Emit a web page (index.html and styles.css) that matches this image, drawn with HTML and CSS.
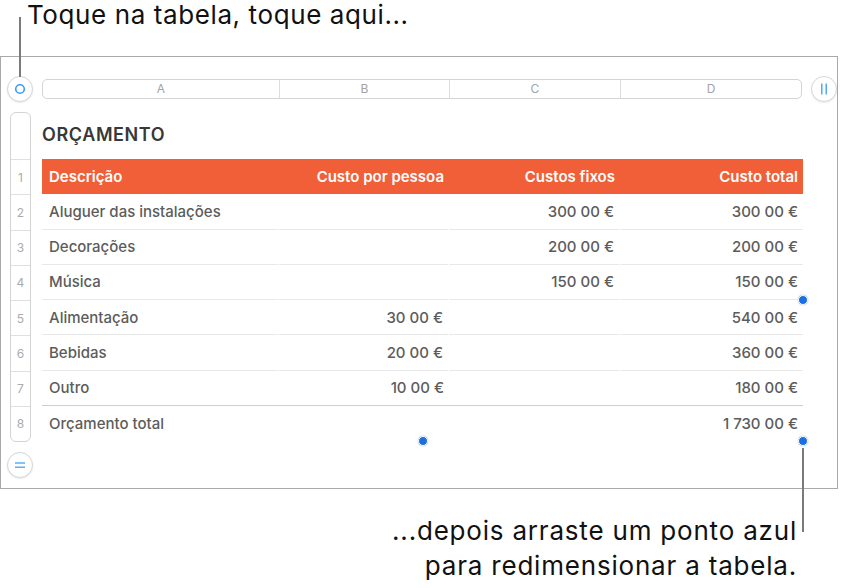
FILE: index.html
```html
<!DOCTYPE html>
<html lang="pt">
<head>
<meta charset="utf-8">
<title>Orçamento</title>
<link rel="stylesheet" href="styles.css">
</head>
<body>
<div class="page">
  <span class="leader leader-top"></span>
  <p class="callout callout-top">Toque na tabela, toque aqui...</p>

  <div class="frame">
    <div class="toolbar">
      <button class="round-btn" aria-label="Selecionar tabela">
        <svg width="26" height="26" viewBox="0 0 26 26"><circle cx="13" cy="13" r="4.3" fill="none" stroke="#3a9cf5" stroke-width="1.6"/></svg>
      </button>
      <div class="col-bar">
        <div class="col-cell">A</div>
        <div class="col-cell">B</div>
        <div class="col-cell">C</div>
        <div class="col-cell">D</div>
      </div>
      <button class="round-btn" aria-label="Colunas">
        <svg width="26" height="26" viewBox="0 0 26 26"><path d="M10.8 7.5v11M15.2 7.5v11" stroke="#3a9cf5" stroke-width="1.3" fill="none"/></svg>
      </button>
    </div>

    <div class="sheet">
      <div class="rail">
        <div class="rail-head"></div>
        <div class="rail-cell">1</div>
        <div class="rail-cell">2</div>
        <div class="rail-cell">3</div>
        <div class="rail-cell">4</div>
        <div class="rail-cell">5</div>
        <div class="rail-cell">6</div>
        <div class="rail-cell">7</div>
        <div class="rail-cell">8</div>
      </div>

      <div class="table-area">
        <h2 class="title">ORÇAMENTO</h2>
        <div class="table">
          <div class="row head">
            <div class="cell">Descrição</div>
            <div class="cell num">Custo por pessoa</div>
            <div class="cell num">Custos fixos</div>
            <div class="cell num">Custo total</div>
          </div>
          <div class="row">
            <div class="cell">Aluguer das instalações</div>
            <div class="cell num"></div>
            <div class="cell num">300 00 €</div>
            <div class="cell num">300 00 €</div>
          </div>
          <div class="row">
            <div class="cell">Decorações</div>
            <div class="cell num"></div>
            <div class="cell num">200 00 €</div>
            <div class="cell num">200 00 €</div>
          </div>
          <div class="row">
            <div class="cell">Música</div>
            <div class="cell num"></div>
            <div class="cell num">150 00 €</div>
            <div class="cell num">150 00 €</div>
          </div>
          <div class="row">
            <div class="cell">Alimentação</div>
            <div class="cell num">30 00 €</div>
            <div class="cell num"></div>
            <div class="cell num">540 00 €</div>
          </div>
          <div class="row">
            <div class="cell">Bebidas</div>
            <div class="cell num">20 00 €</div>
            <div class="cell num"></div>
            <div class="cell num">360 00 €</div>
          </div>
          <div class="row before-total">
            <div class="cell">Outro</div>
            <div class="cell num">10 00 €</div>
            <div class="cell num"></div>
            <div class="cell num">180 00 €</div>
          </div>
          <div class="row total">
            <div class="cell">Orçamento total</div>
            <div class="cell num"></div>
            <div class="cell num"></div>
            <div class="cell num">1 730 00 €</div>
          </div>

          <span class="handle handle-right"></span>
          <span class="handle handle-bottom"></span>
          <span class="handle handle-corner"></span>
        </div>
      </div>
    </div>

    <button class="round-btn rows-btn" aria-label="Linhas">
      <svg width="26" height="26" viewBox="0 0 26 26"><path d="M8 11h10M8 15.3h10" stroke="#5aaef5" stroke-width="1.5" fill="none"/></svg>
    </button>
  </div>

  <span class="leader leader-bottom"></span>
  <p class="callout callout-bottom">...depois arraste um ponto azul<br>para redimensionar a tabela.</p>
</div>
</body>
</html>
```

FILE: styles.css
```css
* {
  box-sizing: border-box;
}

html, body {
  margin: 0;
  padding: 0;
  background: #ffffff;
}

body {
  font-family: Inter, "Liberation Sans", sans-serif;
  color: #111;
}

.page {
  position: relative;
  width: 843px;
  height: 588px;
  overflow: hidden;
}

.callout {
  margin: 0;
  font-size: 26px;
  font-weight: 400;
  color: #111;
  letter-spacing: 0.6px;
}

.callout-top {
  line-height: 30px;
  padding-left: 27px;
}

.callout-bottom {
  margin-top: 24px;
  line-height: 35px;
  text-align: right;
  padding-right: 46px;
  letter-spacing: 0.8px;
}

.leader {
  position: absolute;
  width: 2px;
  background: #7b7b7b;
  z-index: 2;
}

.leader-top {
  left: 19px;
  top: 17px;
  height: 60px;
}

.leader-bottom {
  left: 802px;
  top: 448px;
  height: 84px;
}

/* frame */
.frame {
  margin-top: 26px;
  width: 838px;
  height: 433px;
  border: 1px solid #a9a9a9;
  display: flex;
  flex-direction: column;
}

.toolbar {
  margin-top: 19px;
  height: 26px;
  padding-left: 6px;
  display: flex;
  align-items: center;
}

.round-btn {
  width: 26px;
  height: 26px;
  padding: 0;
  border: 1px solid #d6d6d6;
  border-radius: 50%;
  background: #fff;
  box-shadow: 0 1px 1.5px rgba(0, 0, 0, 0.08);
  display: flex;
  align-items: center;
  justify-content: center;
  flex: none;
}

.round-btn svg {
  display: block;
  margin: -1px;
}

.col-bar {
  margin: 0 9px;
  width: 761px;
  height: 20px;
  border: 1px solid #d4d4d4;
  border-radius: 5px;
  display: grid;
  grid-template-columns: 236px 170px 171px 1fr;
  background: #fff;
}

.col-cell {
  font-size: 12px;
  line-height: 18px;
  color: #a3a3a3;
  text-align: center;
  border-left: 1px solid #dcdcdc;
}

.col-cell:first-child {
  border-left: none;
}

/* sheet */
.sheet {
  margin-top: 10px;
  display: flex;
  align-items: flex-start;
}

.rail {
  margin-left: 9px;
  width: 21px;
  border: 1px solid #d4d4d4;
  border-radius: 6px;
  display: flex;
  flex-direction: column;
}

.rail-head {
  height: 46px;
}

.rail-cell {
  height: 35.25px;
  border-top: 1px solid #e0e0e0;
  font-size: 12px;
  color: #ababab;
  display: flex;
  align-items: center;
  justify-content: center;
}

.table-area {
  margin-left: 11px;
  width: 761px;
}

.title {
  margin: 0;
  height: 47px;
  padding-top: 12px;
  font-size: 18px;
  line-height: 22px;
  font-weight: 600;
  color: #383838;
  letter-spacing: 0.6px;
}

.table {
  position: relative;
}

.row {
  display: grid;
  grid-template-columns: 237px 170px 171px 183px;
  height: 35.25px;
}

.cell {
  padding: 0 5px 0 7px;
  margin-right: 1px;
  font-size: 15px;
  font-weight: 500;
  color: #5c5c5c;
  display: flex;
  align-items: center;
  border-bottom: 1px solid #e8e8e8;
  white-space: nowrap;
}

.cell:last-child {
  margin-right: 0;
}

.cell.num {
  justify-content: flex-end;
}

.row.head {
  background: #f05f37;
}

.row.head .cell {
  color: #fff;
  font-weight: 600;
  border-bottom: none;
  margin-right: 0;
}

.row.before-total .cell {
  border-bottom-color: #cfcfcf;
  margin-right: 0;
}

.row.total .cell {
  border-bottom: none;
}

/* resize handles */
.handle {
  position: absolute;
  width: 10px;
  height: 10px;
  border-radius: 50%;
  background: #1a6fe3;
  border: 1.5px solid #fff;
  box-shadow: 0 0 1.5px rgba(0, 0, 0, 0.35);
  transform: translate(-50%, -50%);
  z-index: 3;
}

.handle-right {
  left: 100%;
  top: 50%;
}

.handle-bottom {
  left: 50%;
  top: 100%;
}

.handle-corner {
  left: 100%;
  top: 100%;
}

.rows-btn {
  margin-top: 10px;
  margin-left: 6px;
}
```
